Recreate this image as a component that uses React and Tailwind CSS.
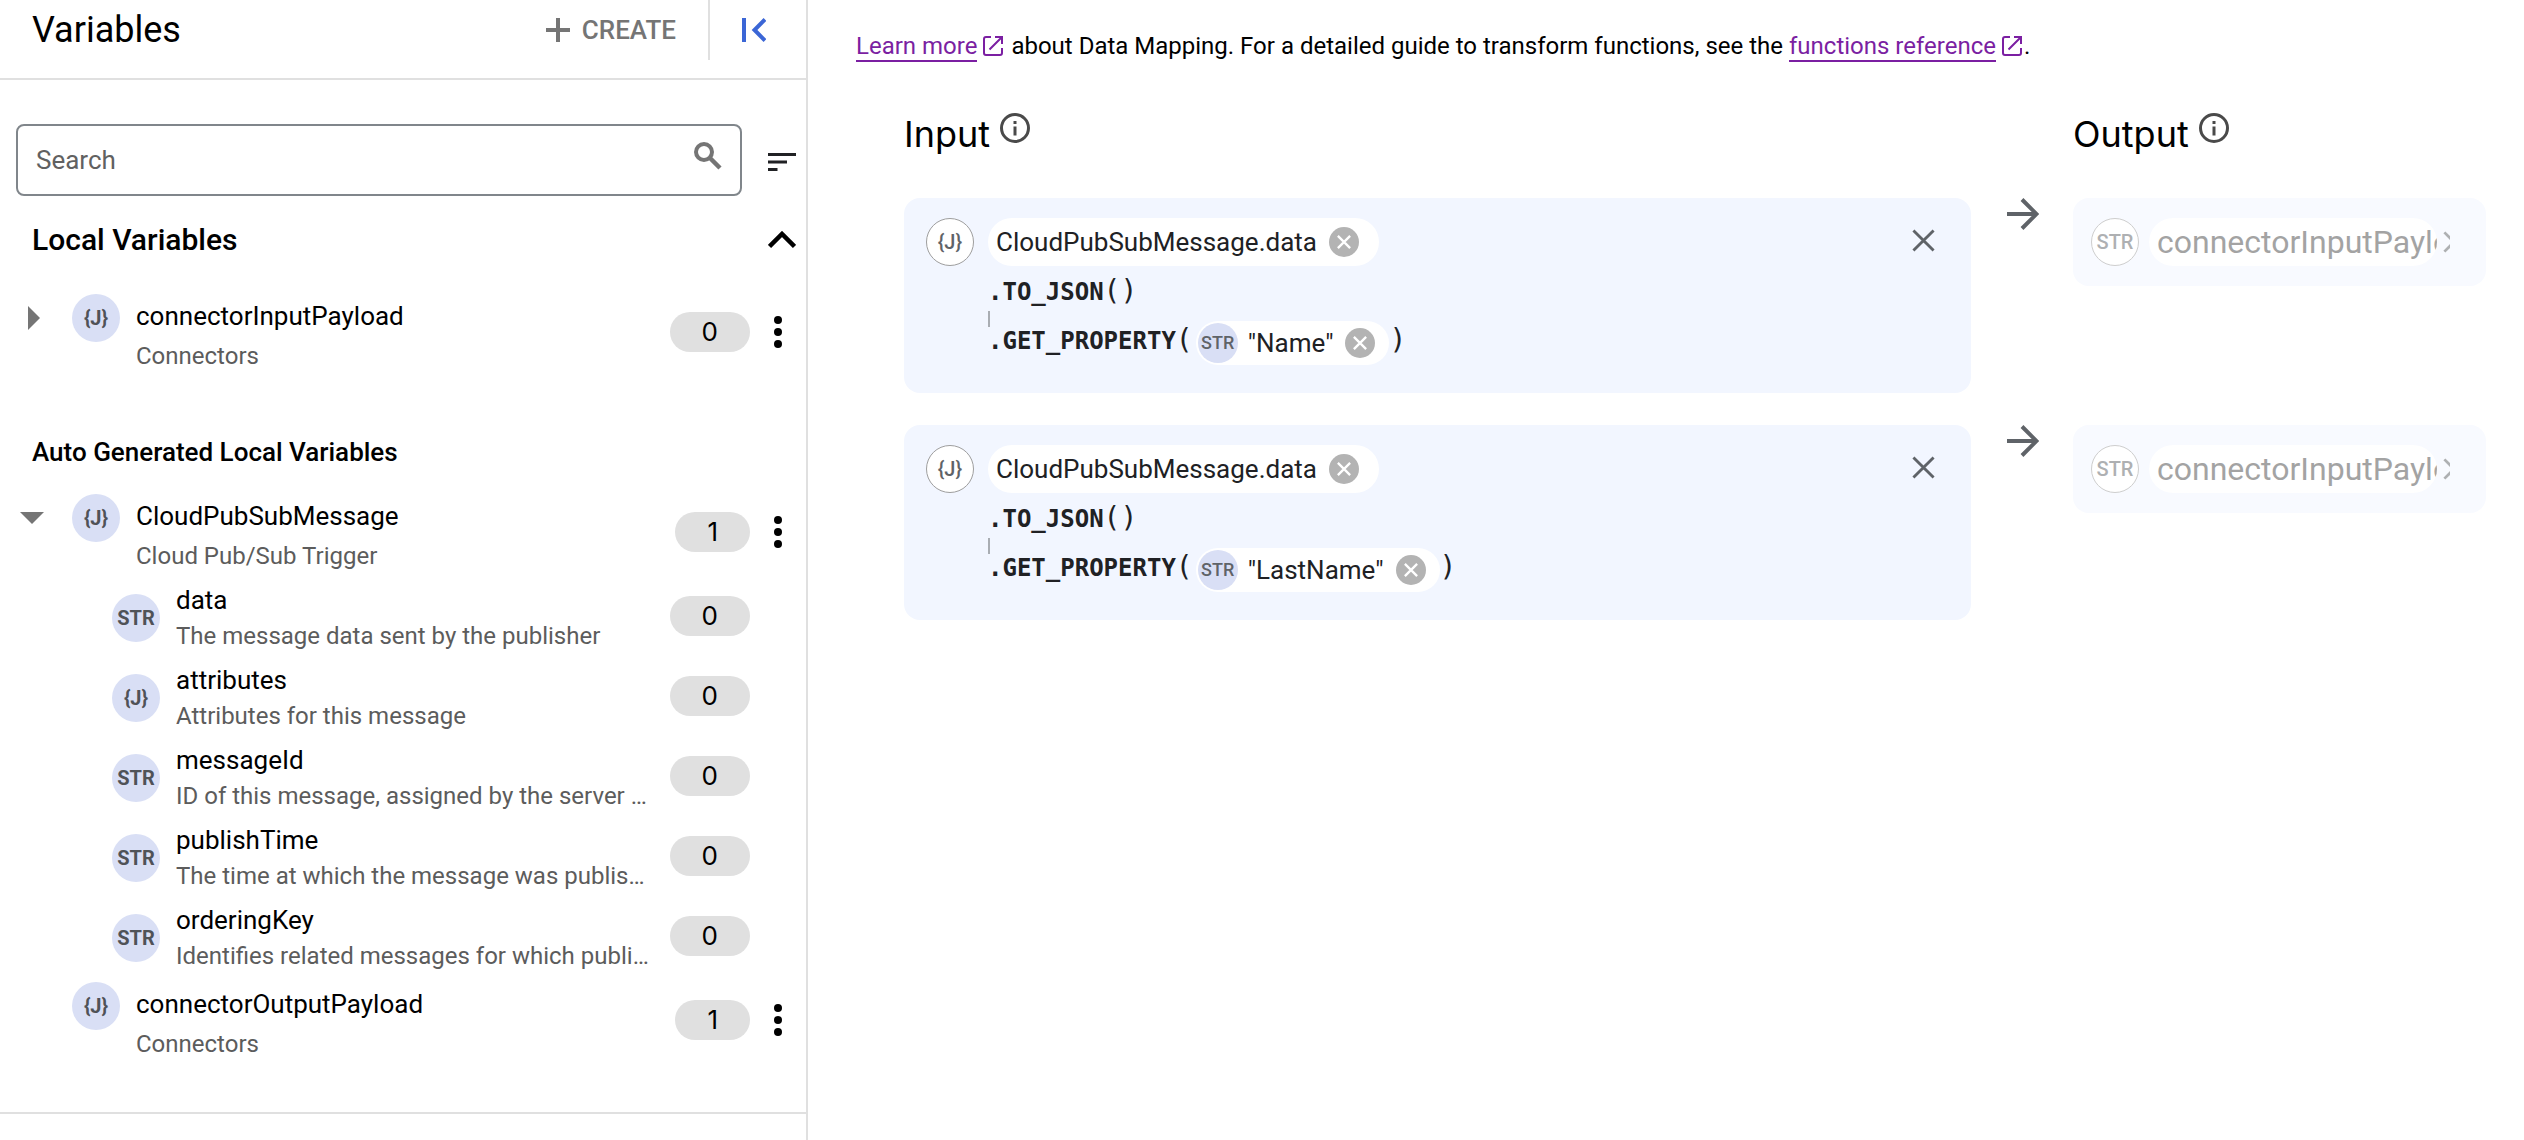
import React from "react";

const fields = [
  ["STR", "data", "The message data sent by the publisher"],
  ["{J}", "attributes", "Attributes for this message"],
  ["STR", "messageId", "ID of this message, assigned by the server when"],
  ["STR", "publishTime", "The time at which the message was published"],
  ["STR", "orderingKey", "Identifies related messages for which publish"],
];

function Plus() {
  return (
    <svg width="24" height="24" viewBox="0 0 24 24" fill="currentColor" aria-hidden="true">
      <path d="M10 0h4v10h10v4H14v10h-4V14H0v-4h10z" />
    </svg>
  );
}

function CollapseLeft() {
  return (
    <svg width="24" height="24" viewBox="0 0 24 24" fill="none" stroke="currentColor" strokeWidth="4" aria-hidden="true">
      <path d="M2 0v24M23 1.500L12.500 12 23 22.500" />
    </svg>
  );
}

function Magnifier() {
  return (
    <svg width="28" height="28" viewBox="0 0 28 28" fill="none" stroke="currentColor" strokeWidth="4" aria-hidden="true">
      <circle cx="10" cy="10" r="8" />
      <path d="M15.500 15.500L26 26" strokeWidth="4.500" />
    </svg>
  );
}

function Sort() {
  return (
    <svg width="28" height="18" viewBox="0 0 28 18" fill="currentColor" aria-hidden="true">
      <path d="M0 0h28v3H0zM0 7.500h19v3H0zM0 15h9.500v3H0z" />
    </svg>
  );
}

function ChevronUp() {
  return (
    <svg width="28" height="18" viewBox="0 0 28 18" fill="none" stroke="currentColor" strokeWidth="4.500" aria-hidden="true">
      <path d="M1.500 15.500L14 3l12.500 12.500" />
    </svg>
  );
}

function Dots() {
  return (
    <svg width="8" height="32" viewBox="0 0 8 32" fill="currentColor" aria-hidden="true">
      <circle cx="4" cy="4" r="4" />
      <circle cx="4" cy="16" r="4" />
      <circle cx="4" cy="28" r="4" />
    </svg>
  );
}

function Info() {
  return (
    <svg width="30" height="30" viewBox="0 0 30 30" fill="none" stroke="currentColor" strokeWidth="3" aria-hidden="true">
      <circle cx="15" cy="15" r="13.500" />
      <path d="M15 13.500V22.500M15 8v3" />
    </svg>
  );
}

function Cross({ className, weight = 3 }) {
  return (
    <svg viewBox="0 0 24 24" fill="none" stroke="currentColor" strokeWidth={weight} className={className} aria-hidden="true">
      <path d="M1.500 1.500l21 21M22.500 1.500l-21 21" />
    </svg>
  );
}

function ArrowRight() {
  return (
    <svg width="32" height="32" viewBox="0 0 32 32" fill="none" stroke="currentColor" strokeWidth="4" aria-hidden="true">
      <path d="M0 16h29M15 1.500L29.500 16 15 30.500" />
    </svg>
  );
}

function External() {
  return (
    <svg width="24" height="24" viewBox="0 0 24 24" fill="none" stroke="currentColor" strokeWidth="2" className="ml-1 inline align-[-4px]" aria-hidden="true">
      <path d="M10 3H5a2 2 0 0 0-2 2v14a2 2 0 0 0 2 2h14a2 2 0 0 0 2-2v-5M14 3h7v7M21 3L8.500 15.500" />
    </svg>
  );
}

function TypeDot({ type }) {
  return (
    <span className="flex size-12 shrink-0 items-center justify-center rounded-full bg-[#d9dff5] text-[20px] leading-6 font-bold text-[#4f5257]">
      {type}
    </span>
  );
}

function TypeRing({ type }) {
  return (
    <span className="flex size-12 shrink-0 items-center justify-center rounded-full border border-[#9e9e9e] bg-white text-[20px] leading-6 font-medium text-[#5f6368]">
      {type}
    </span>
  );
}

function Count({ value }) {
  return (
    <span className="flex h-10 shrink-0 items-center justify-center rounded-full bg-[#e0e0e0] px-8 font-[Inter,sans-serif] text-[26px] leading-8 text-black">
      {value}
    </span>
  );
}

function Variable({ name, source, count, arrow, className = "" }) {
  return (
    <div className={"flex h-20 pr-2 pl-6 " + className}>
      <div className="flex size-12 shrink-0 items-center">
        {arrow === "closed" && (
          <button aria-label={"Expand " + name} className="pl-1">
            <svg width="12" height="24" viewBox="0 0 12 24" className="fill-[#757575]"><path d="M0 0l12 12L0 24z" /></svg>
          </button>
        )}
        {arrow === "open" && (
          <button aria-label={"Collapse " + name} className="-ml-1">
            <svg width="24" height="12" viewBox="0 0 24 12" className="fill-[#757575]"><path d="M0 0h24L12 12z" /></svg>
          </button>
        )}
      </div>
      <TypeDot type="{J}" />
      <div className="ml-4 min-w-0 grow">
        <div className="h-10 truncate pt-1 text-[26px] leading-9 text-black">{name}</div>
        <div className="truncate pt-1 text-[24px] leading-9 text-[#5c5c5c]">{source}</div>
      </div>
      <div className="flex h-[76px] items-center">
        <Count value={count} />
        <button aria-label={"Options for " + name} className="ml-2 flex size-10 items-center justify-center">
          <Dots />
        </button>
      </div>
    </div>
  );
}

function ClearButton({ label }) {
  return (
    <button aria-label={label} className="flex size-[30px] items-center justify-center rounded-full bg-[#b3b3b3] text-white">
      <Cross className="size-[14px]" weight={4} />
    </button>
  );
}

function Mapping({ property }) {
  return (
    <>
      <section className="flex h-[195px] items-start justify-between rounded-2xl bg-[#f2f6ff] pt-5 pr-9 pl-[22px]">
        <div className="flex gap-[14px]">
          <TypeRing type="{J}" />
          <div>
            <div className="flex h-12 w-fit items-center gap-3 rounded-full bg-white pr-5 pl-2 text-[26px] text-[#202124]">
              CloudPubSubMessage.data
              <ClearButton label="Clear variable" />
            </div>
            <div className="h-[49px] font-['DejaVu_Sans_Mono',monospace] text-[28px] leading-[49px] text-[#202124]">
              <b className="text-[24px]">.TO_JSON</b>()
            </div>
            <div className="flex h-[49px] font-['DejaVu_Sans_Mono',monospace] text-[28px] leading-[49px] text-[#202124]">
              <span className="relative pr-[3px] before:absolute before:-top-1 before:left-0 before:h-4 before:w-[2px] before:bg-[#a9adb3]">
                <b className="text-[24px]">.GET_PROPERTY</b>(
              </span>
              <span className="mt-[6px] flex h-11 items-center rounded-full bg-white pr-[14px] pl-[2px] font-[Roboto,sans-serif] text-[26px] leading-8">
                <span className="mr-[10px] flex size-10 items-center justify-center rounded-full bg-[#d9dff5] text-[18px] font-medium text-[#5f6368]">STR</span>
                <span className="mr-3">"{property}"</span>
                <ClearButton label={"Clear " + property} />
              </span>
              <span>)</span>
            </div>
          </div>
        </div>
        <button aria-label="Remove mapping" className="mt-[11px] text-[#5f6368]">
          <Cross className="size-[23px]" />
        </button>
      </section>
      <div className="pl-9 text-[#5f6368]"><ArrowRight /></div>
      <section className="flex h-[88px] items-center self-start rounded-2xl bg-[#f2f6ff] pr-9 pl-[18px] opacity-50">
        <TypeRing type="STR" />
        <span className="ml-[10px] flex h-12 min-w-0 grow items-center overflow-hidden rounded-full bg-white pl-2 text-[32px] leading-10 whitespace-nowrap text-[#4a4a4a]">
          connectorInputPayload
        </span>
        <button aria-label="Clear output" className="ml-[6px] flex w-[7px] shrink-0 overflow-hidden text-[#5f6368]">
          <Cross className="size-[22px] shrink-0" />
        </button>
      </section>
    </>
  );
}

function DocLink({ children }) {
  return (
    <a href="#docs" className="text-[#7b1fa2]">
      <span className="border-b-2 border-[#7b1fa2]">{children}</span>
      <External />
    </a>
  );
}

function Heading({ children }) {
  return (
    <div className="mb-2 flex items-start gap-[10px]">
      <h2 className="font-[Inter,sans-serif] text-[36px] leading-[48px] text-black">{children}</h2>
      <button aria-label={"About " + children} className="mt-[3px] text-[#4a4a4a]"><Info /></button>
    </div>
  );
}

export default function App() {
  return (
    <div className="flex min-h-screen bg-white font-[Roboto,sans-serif] text-black">
      <aside className="w-[808px] shrink-0 border-r-2 border-[#e0e0e0]">
        <header className="flex h-20 items-start border-b-2 border-[#e0e0e0] pl-8">
          <h1 className="grow text-[36px] leading-[60px]">Variables</h1>
          <button className="flex h-[60px] items-center gap-3 border-r-2 border-[#e0e0e0] pr-8 text-[26px] font-medium text-[#757575]">
            <Plus />CREATE
          </button>
          <button aria-label="Collapse panel" className="flex h-[60px] items-center pr-10 pl-8 text-[#3b66d6]"><CollapseLeft /></button>
        </header>
        <div className="mt-11 flex items-center pr-[10px] pl-4">
          <label className="flex h-[72px] grow items-center rounded-lg border-2 border-[#80868b] pr-[18px] pl-[18px] text-[#757575]">
            <input type="search" aria-label="Search" placeholder="Search" className="min-w-0 grow bg-transparent text-[26px] text-black outline-none placeholder:text-[#616161]" />
            <span className="mb-2"><Magnifier /></span>
          </label>
          <button aria-label="Sort" className="mt-1 ml-[26px] text-[#202124]"><Sort /></button>
        </div>
        <div className="mt-5 flex h-12 items-center justify-between pr-[10px] pl-8">
          <h2 className="text-[30px] leading-10 font-medium">Local Variables</h2>
          <button aria-label="Collapse local variables"><ChevronUp /></button>
        </div>
        <Variable className="mt-[30px]" name="connectorInputPayload" source="Connectors" count="0" arrow="closed" />
        <h3 className="mt-[58px] pl-8 text-[26px] leading-10 font-medium">Auto Generated Local Variables</h3>
        <Variable className="mt-[22px]" name="CloudPubSubMessage" source="Cloud Pub/Sub Trigger" count="1" arrow="open" />
        <ul className="mt-2">
          {fields.map(([type, name, text]) => (
            <li key={name} className="flex h-20 pt-3 pr-14 pl-28">
              <TypeDot type={type} />
              <div className="-mt-3 ml-4 min-w-0 grow">
                <div className="truncate text-[26px] leading-9">{name}</div>
                <div className="truncate text-[24px] leading-9 text-[#5c5c5c]">{text}</div>
              </div>
              <div className="ml-4 flex h-11 items-center"><Count value="0" /></div>
            </li>
          ))}
        </ul>
        <Variable name="connectorOutputPayload" source="Connectors" count="1" />
        <div className="mt-[50px] border-b-2 border-[#e0e0e0]" />
      </aside>
      <main className="min-w-0 grow pt-6 pr-[38px] pl-12">
        <p className="text-[24px] leading-[44px]">
          <DocLink>Learn more</DocLink> about Data Mapping. For a detailed guide to transform functions, see the <DocLink>functions reference</DocLink>.
        </p>
        <div className="mt-[42px] ml-12 grid grid-cols-[minmax(0,1067fr)_102px_minmax(0,413fr)] gap-y-8">
          <Heading>Input</Heading>
          <div />
          <Heading>Output</Heading>
          <Mapping property="Name" />
          <Mapping property="LastName" />
        </div>
      </main>
    </div>
  );
}
